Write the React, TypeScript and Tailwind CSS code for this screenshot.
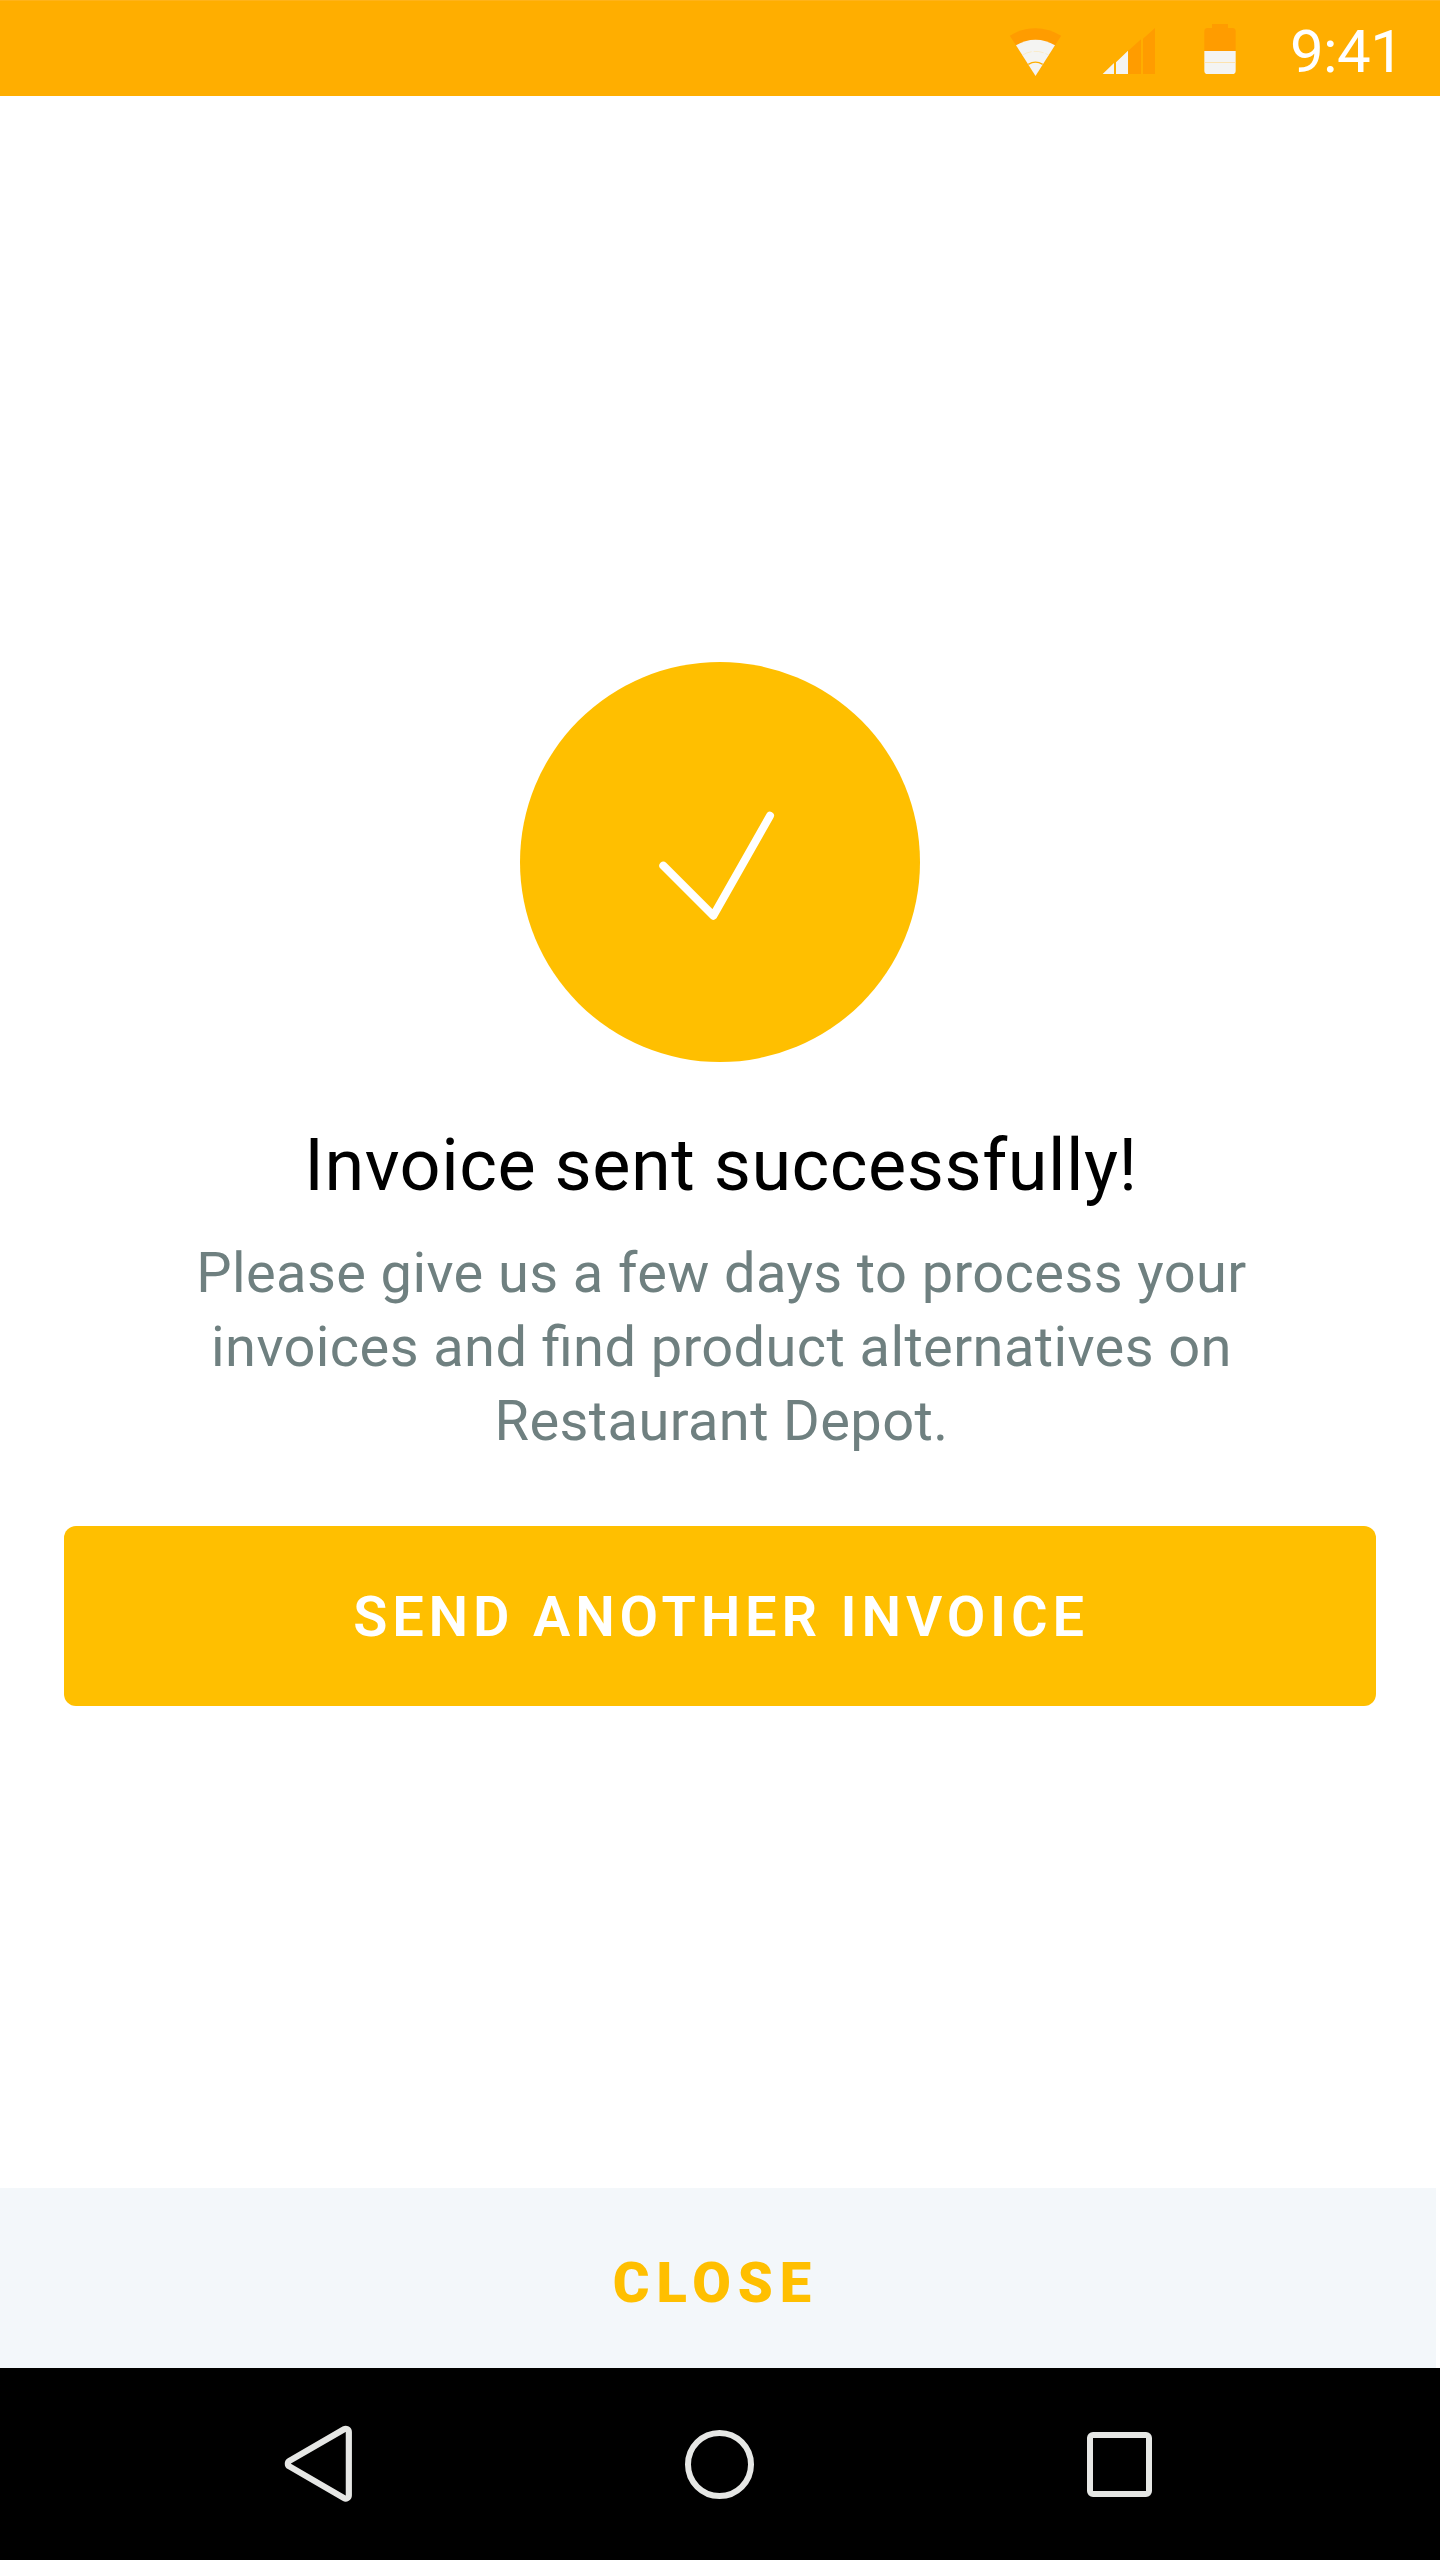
function WifiIcon() {
  return (
    <svg className="h-24 w-[53px]" viewBox="57 0 159 288" aria-hidden="true">
      <path d="M136.5 228 L59.5 107 A143 143 0 0 1 213.5 107 Z" fill="#ff9c00" />
      <path d="M136.5 228 L78 136 A110 110 0 0 1 195 136 Z" fill="#f4f4f2" />
      <path d="M97 165.5 A74 74 0 0 1 176 165.5" fill="none" stroke="#ffe3a3" strokeWidth="1.5" strokeDasharray="30 6" />
      <path d="M115 193 A41 41 0 0 1 158 193" fill="none" stroke="#ffae00" strokeWidth="4" />
    </svg>
  );
}

function SignalIcon() {
  return (
    <svg className="h-24 w-[54px]" viewBox="336 0 162 288" aria-hidden="true">
      <path d="M338 222 L372 189 V222 Z M378 187 L414 152 V222 H378 Z" fill="#f4f4f2" />
      <path d="M415 152 L453 118 V222 H415 Z M459 116 L495 84 V222 H459 Z" fill="#ff9c00" />
    </svg>
  );
}

function BatteryIcon() {
  return (
    <svg className="h-24 w-8" viewBox="642 0 96 288" aria-hidden="true">
      <path d="M643 153 V94 Q643 84 653 84 H666 V72 H714 V84 H727 Q737 84 737 94 V153 Z" fill="#ff9c00" />
      <path d="M643 153 H737 V212 Q737 222 727 222 H653 Q643 222 643 212 Z" fill="#f4f4f2" />
      <path d="M643 187.500 H737" stroke="#ffe0a0" strokeWidth="2.500" />
    </svg>
  );
}

function BackIcon() {
  return (
    <svg className="-mt-0.5 h-[81px] w-[70px]" viewBox="69 69 210 243" aria-hidden="true">
      <path
        d="M88.2 182.8 L252.2 87.8 A9.5 9.5 0 0 1 266.500 96 V286 A9.5 9.5 0 0 1 252.2 294.2 L88.2 199.2 A9.5 9.5 0 0 1 88.2 182.8 Z"
        fill="none"
        stroke="#e6e7e5"
        strokeWidth="18.5"
      />
    </svg>
  );
}

export default function App() {
  return (
    <div className="flex h-[2560px] w-[1440px] flex-col bg-white font-[Roboto,sans-serif]">
      <header className="flex h-24 shrink-0 items-center justify-end border-t border-[#ffb31a] bg-[#ffae00]">
        <div className="-mt-px flex h-24 items-center">
          <WifiIcon />
          <div className="ml-10">
            <SignalIcon />
          </div>
          <div className="ml-12">
            <BatteryIcon />
          </div>
          <time className="ml-[54px] w-[150px] pt-[7px] text-[60px] leading-[71px] tracking-[-0.6px] text-white">9:41</time>
        </div>
      </header>

      <main className="flex flex-1 flex-col items-center px-16 pt-[566px]">
        <div className="flex size-[400px] items-center justify-center rounded-full bg-[#ffbf00]">
          <svg className="size-[400px]" viewBox="0 0 400 400" aria-hidden="true">
            <path
              d="M143.300 203.700 L193.300 253.700 L250 153.700"
              fill="none"
              stroke="#fff"
              strokeWidth="8"
              strokeLinecap="round"
              strokeLinejoin="round"
            />
          </svg>
        </div>
        <h1 className="mt-[61px] pl-0.5 text-[72px] leading-[85px] font-[450] tracking-[0.53px] text-black">
          Invoice sent successfully!
        </h1>
        <p className="mt-7 w-[1100px] pl-[3px] text-center text-[56px] leading-[74px] font-[450] tracking-[0.39px] text-[#6f8080] [font-feature-settings:'liga'_1]">
          Please give us a few days to process your invoices and find product alternatives on Restaurant Depot.
        </p>
        <button className="mt-[68px] flex h-[180px] w-full items-center justify-center rounded-xl bg-[#ffbf00] pt-0.5 pl-0.5 text-[56px] leading-[66px] font-[650] tracking-[4.8px] text-white">
          SEND ANOTHER INVOICE
        </button>
      </main>

      <button className="flex h-[180px] w-[1436px] shrink-0 items-center justify-center bg-[#f3f7fa] pt-2.5 pr-[5px] text-[56px] leading-[66px] font-black tracking-[7px] text-[#ffbf00]">
        CLOSE
      </button>

      <nav className="flex h-48 shrink-0 items-center gap-[332px] bg-black pt-px pl-[283px]">
        <BackIcon />
        <div className="size-[69px] rounded-full border-6 border-[#e6e7e5]" />
        <div className="ml-px size-[65px] rounded-[6px] border-6 border-[#e6e7e5]" />
      </nav>
    </div>
  );
}
